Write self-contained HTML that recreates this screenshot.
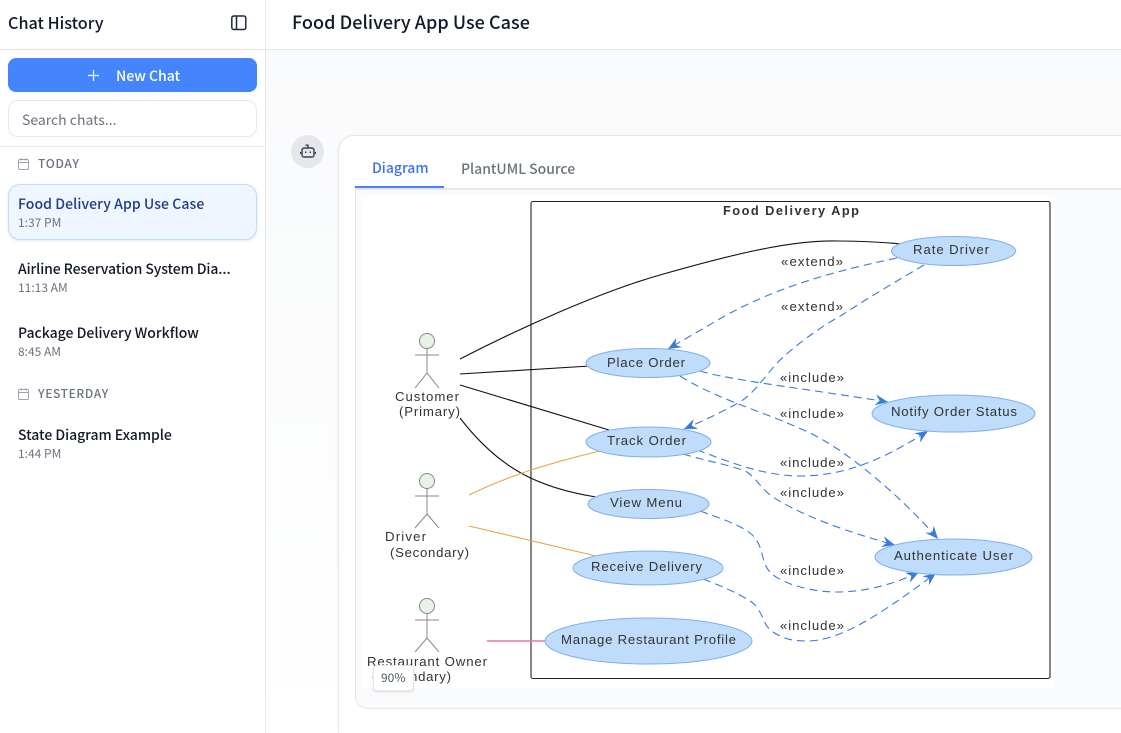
<!DOCTYPE html>
<html><head><meta charset="utf-8"><style>
html,body{margin:0;padding:0;width:1121px;height:733px;overflow:hidden;background:#fff}
body{position:relative;font-family:"Noto Sans CJK SC","Liberation Sans",sans-serif;color:#111827}
div{box-sizing:border-box}
.t{position:absolute;white-space:nowrap;line-height:20px}
.a{position:absolute}
.ttl{font-size:14px;font-weight:500;color:#111827}
.tm{font-size:12px;color:#6b7280}
.hd{font-size:12px;font-weight:500;color:#6b7280;letter-spacing:.7px}
svg text{font-family:"Liberation Sans",sans-serif;font-size:13.2px;fill:#333}
</style></head><body>
<div class="a" style="left:266px;top:50px;width:855px;height:683px;background:linear-gradient(#f9fafb,#fff)"></div>
<div class="a" style="left:265px;top:0;width:1px;height:733px;background:#e5e7eb"></div>
<div class="a" style="left:0;top:49px;width:1121px;height:1px;background:#e5e7eb"></div>
<div class="a" style="left:0;top:146px;width:265px;height:1px;background:#e5e7eb"></div>
<div class="t" style="left:8px;top:12px;font-size:16.2px;font-weight:500">Chat History</div>
<svg class="a" style="left:231px;top:15px" width="16" height="16" viewBox="0 0 16 16" fill="none" stroke="#1f2937" stroke-width="1.5"><rect x=".8" y="1" width="14" height="13.5" rx="2"/><path d="M5.5 1v13.5"/></svg>
<div class="t" style="left:292px;top:12px;font-size:18px;font-weight:500;letter-spacing:.04px">Food Delivery App Use Case</div>

<div class="a" style="left:8px;top:58px;width:249px;height:34px;border-radius:8px;background:#4485fd"></div>
<svg class="a" style="left:87px;top:69px" width="13" height="13" fill="none" stroke="#fff" stroke-width="1.2"><path d="M6.5 1v11M1 6.5h11"/></svg>
<div class="t" style="left:116px;top:66px;font-size:14px;font-weight:500;color:#fff">New Chat</div>
<div class="a" style="left:8px;top:100px;width:249px;height:37px;border-radius:10px;background:#fff;border:1px solid #e5e7eb"></div>
<div class="t" style="left:22px;top:110px;font-size:14px;color:#6b7280">Search chats...</div>

<svg class="a" style="left:18px;top:158px" width="11" height="12" fill="none" stroke="#9ca3af" stroke-width="1"><rect x=".5" y="1.5" width="10" height="10" rx="1.5"/><path d="M.5 4.5h10M3 0v2.5M8 0v2.5"/></svg>
<div class="t hd" style="left:38px;top:154px">TODAY</div>
<div class="a" style="left:8px;top:184px;width:249px;height:56px;border-radius:12px;background:#eff6ff;border:1px solid #bfdbfe;box-shadow:0 1px 3px rgba(0,0,0,.1)"></div>
<div class="t ttl" style="left:18px;top:194px;color:#1e3a8a;letter-spacing:.08px">Food Delivery App Use Case</div>
<div class="t tm" style="left:18px;top:213px">1:37 PM</div>
<div class="t ttl" style="left:18px;top:259px;letter-spacing:-.1px">Airline Reservation System Dia...</div>
<div class="t tm" style="left:18px;top:278px">11:13 AM</div>
<div class="t ttl" style="left:18px;top:323px">Package Delivery Workflow</div>
<div class="t tm" style="left:18px;top:342px">8:45 AM</div>
<svg class="a" style="left:18px;top:388px" width="11" height="12" fill="none" stroke="#9ca3af" stroke-width="1"><rect x=".5" y="1.5" width="10" height="10" rx="1.5"/><path d="M.5 4.5h10M3 0v2.5M8 0v2.5"/></svg>
<div class="t hd" style="left:38px;top:384px;letter-spacing:.6px">YESTERDAY</div>
<div class="t ttl" style="left:18px;top:425px;letter-spacing:-.03px">State Diagram Example</div>
<div class="t tm" style="left:18px;top:444px">1:44 PM</div>

<div class="a" style="left:291px;top:135px;width:33px;height:33px;border-radius:50%;background:#e5e7eb"></div>
<svg class="a" style="left:300px;top:143px" width="16" height="16" fill="none" stroke="#374151" stroke-width="1.4"><rect x="2" y="5" width="12" height="9" rx="2"/><path d="M8 5V2.2H5.5M0.6 9v2M15.4 9v2"/><path d="M5.700 8.500v1.500M10.300 8.500v1.500"/></svg>

<div class="a" style="left:338px;top:135px;width:783px;height:598px;border-radius:16px 0 0 0;background:#fff;border:1px solid #e5e7eb;border-right:0;border-bottom:0;box-shadow:0 1px 3px rgba(0,0,0,.06)"></div>
<div class="t" style="left:372px;top:158px;font-size:14px;font-weight:500;color:#3b6ff6">Diagram</div>
<div class="t" style="left:461px;top:159px;font-size:14px;font-weight:500;color:#6b7280;letter-spacing:-.03px">PlantUML Source</div>
<div class="a" style="left:355px;top:188px;width:766px;height:521px;background:#f9fafb;border:1px solid #e5e7eb;border-top:2px solid #e5e7eb;border-right:0;border-radius:0 0 0 12px"></div>
<div class="a" style="left:355px;top:186px;width:89px;height:2px;background:#4485fd"></div>
<div class="a" style="left:361px;top:195px;width:694px;height:493px;background:#fff"></div>

<svg class="a" style="left:0;top:0" width="1121" height="733" viewBox="0 0 1121 733" fill="none">
<defs><marker id="h" markerUnits="userSpaceOnUse" markerWidth="18" markerHeight="14" refX="15" refY="7" orient="auto"><path d="M15 7L2 1.500 6.500 7 2 12.500Z" fill="#3a7bd5"/></marker></defs>
<rect x="531" y="201.500" width="519" height="477" rx="2" stroke="#222" stroke-width="1.100"/>
<text x="723" y="215" textLength="136" style="font-weight:700;font-size:12.800px" lengthAdjust="spacing">Food Delivery App</text>
<g stroke="#111" stroke-width="1.100">
<path d="M460 359C520 328 600 292 660 275C730 255 790 240 837 241C860 241 880 242 902 244"/>
<path d="M460 374L590 366"/><path d="M460 385L609 430"/>
<path d="M460 418C500 470 540 488 596 497"/>
</g>
<path d="M469 495C510 475 550 463 600 451M469 526L596 556" stroke="#e3a83f" stroke-width="1.100"/>
<path d="M487 641H545" stroke="#e8799a" stroke-width="1.400"/>
<g stroke="#3a7bd5" stroke-width="1.100" stroke-dasharray="8 5">
<path d="M897 258C830 272 775 288 723 317L668 349" marker-end="url(#h)"/>
<path d="M924 265C890 285 860 303 842 315C815 330 790 350 777 363C762 380 755 392 740 402C720 413 705 420 684 429" marker-end="url(#h)"/>
<path d="M700 371C730 380 800 388 888 402" marker-end="url(#h)"/>
<path d="M680 376C710 395 750 408 780 420C800 428 815 435 823 440C850 455 900 495 938 539" marker-end="url(#h)"/>
<path d="M697 450C720 458 760 476 800 476C850 476 890 455 928 431" marker-end="url(#h)"/>
<path d="M683 454C710 462 735 466 747 472C758 480 762 490 773 497C800 515 850 533 895 545" marker-end="url(#h)"/>
<path d="M700 511C720 518 740 525 750 533C765 545 760 562 770 572C780 583 810 592 837 592C865 592 895 584 919 572" marker-end="url(#h)"/>
<path d="M703 579C725 587 745 597 753 603C765 615 762 625 773 632C785 640 795 641 807 641C840 641 880 615 936 573" marker-end="url(#h)"/>
</g>
<g fill="#bfdcfb" stroke="#7fb0ea" stroke-width="1">
<ellipse cx="953.500" cy="251" rx="62" ry="14.500"/>
<ellipse cx="953.500" cy="413.500" rx="81.500" ry="18.500"/>
<ellipse cx="648" cy="363" rx="62" ry="14.500"/>
<ellipse cx="648.500" cy="442" rx="62.500" ry="15"/>
<ellipse cx="648.500" cy="504" rx="60.500" ry="14.500"/>
<ellipse cx="648" cy="568" rx="75" ry="17"/>
<ellipse cx="648.500" cy="641" rx="103.500" ry="23"/>
<ellipse cx="953.500" cy="557" rx="78.500" ry="18"/>
</g>
<g stroke="#888" stroke-width="1">
<circle cx="427" cy="341" r="7.500" fill="#e8f3e8"/><path d="M427 348.500V373M415 355H439M427 373L415 388M427 373L439 388"/>
<circle cx="427" cy="481" r="7.500" fill="#e8f3e8"/><path d="M427 488.500V514M415 496H439M427 514L415 528M427 514L439 528"/>
<circle cx="427" cy="606" r="7.500" fill="#e8f3e8"/><path d="M427 613.500V638M415 620H439M427 638L415 652M427 638L439 652"/>
</g>
<text x="913" y="254" textLength="76">Rate Driver</text>
<text x="891" y="416" textLength="126">Notify Order Status</text>
<text x="607" y="367" textLength="78">Place Order</text>
<text x="607" y="445" textLength="79">Track Order</text>
<text x="610" y="507" textLength="72">View Menu</text>
<text x="591" y="571" textLength="111">Receive Delivery</text>
<text x="561" y="644" textLength="175">Manage Restaurant Profile</text>
<text x="894" y="560" textLength="119">Authenticate User</text>
<text x="781" y="266" textLength="62">«extend»</text>
<text x="781" y="311" textLength="62">«extend»</text>
<text x="780" y="382" textLength="64">«include»</text>
<text x="780" y="418" textLength="64">«include»</text>
<text x="780" y="467" textLength="64">«include»</text>
<text x="780" y="497" textLength="64">«include»</text>
<text x="780" y="575" textLength="64">«include»</text>
<text x="780" y="630" textLength="64">«include»</text>
<text x="395" y="401" textLength="64">Customer</text>
<text x="399" y="416" textLength="61">(Primary)</text>
<text x="385" y="541" textLength="41">Driver</text>
<text x="390" y="557" textLength="79">(Secondary)</text>
<text x="367" y="666" textLength="120">Restaurant Owner</text>
<text x="372" y="681" textLength="79">(Secondary)</text>
</svg>
<div class="a" style="left:373px;top:665px;width:41px;height:26px;background:#fff;border:1px solid #e5e7eb;border-radius:4px;box-shadow:0 1px 2px rgba(0,0,0,.12)"></div>
<div class="t" style="left:381px;top:668px;font-size:12px;color:#4b5563">90%</div>
</body></html>
